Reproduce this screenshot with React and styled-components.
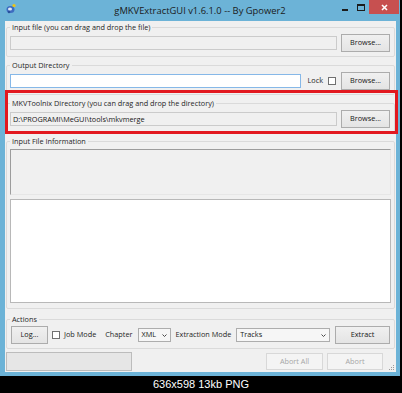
import React from 'react'
import styled, { createGlobalStyle } from 'styled-components'

const GlobalStyle = createGlobalStyle`
  body {
    margin: 0;
    background: #000;
    font-family: 'Open Sans', 'Liberation Sans', sans-serif;
  }
`

const UI_FONT = `'Open Sans', 'Liberation Sans', sans-serif`

const Page = styled.div`
  width: 402px;
  height: 393px;
  background: #000;
  display: flex;
  flex-direction: column;
`

const Window = styled.div`
  width: 400px;
  height: 376px;
  background: #6cb3d7;
  display: flex;
  flex-direction: column;
`

const TitleBar = styled.div`
  height: 21px;
  display: grid;
  grid-template-columns: 1fr auto 1fr;
  align-items: start;
`

const AppIcon = styled.svg`
  margin: 3px 0 0 6px;
`

const Title = styled.div`
  font: 9.4px/22px ${UI_FONT};
  color: #1b1b1b;
  white-space: nowrap;
`

const Controls = styled.div`
  justify-self: end;
  display: flex;
  margin-right: 1px;
`

const CaptionButton = styled.div`
  width: ${p => p.$w}px;
  height: 14px;
  background: ${p => (p.$close ? '#c75050' : 'transparent')};
  display: flex;
  align-items: center;
  justify-content: center;
`

const Client = styled.div`
  position: relative;
  flex: 1;
  margin: 0 4px 4px 5px;
  background: #f0f0f0;
  display: flex;
  flex-direction: column;
  padding: 2px 0 1px;
`

const Group = styled.fieldset`
  margin: ${p => p.$mt ?? 4}px 1px 0;
  padding: ${p => p.$pt ?? 2}px 4px ${p => p.$pb ?? 4}px 3px;
  border: 1px solid #dadada;
  border-radius: 2px;
  min-width: 0;
  display: flex;
  flex-direction: column;
`

const Legend = styled.legend`
  padding: 0 2px;
  font: 7.3px/9px ${UI_FONT};
  color: #262626;
`

const Row = styled.div`
  display: flex;
  align-items: center;
  height: 18px;
`

const TextBox = styled.div`
  flex: 1;
  box-sizing: border-box;
  height: 14px;
  padding: 0 2px;
  border: 1px solid ${p => (p.$active ? '#86b8e8' : '#cbcbcb')};
  background: ${p => (p.$active ? '#fff' : '#f0f0f0')};
  font: 7.3px/12px ${UI_FONT};
  color: #151515;
  white-space: nowrap;
  overflow: hidden;
`

const Button = styled.button`
  box-sizing: border-box;
  flex: none;
  width: ${p => p.$w}px;
  height: ${p => p.$h ?? 18}px;
  margin: 0 0 0 ${p => (p.$ml === 'auto' ? 'auto' : `${p.$ml ?? 0}px`)};
  padding: 0;
  border: 1px solid ${p => (p.disabled ? '#d8d8d8' : '#acacac')};
  background: ${p => (p.disabled ? '#f4f4f4' : 'linear-gradient(#f0f0f0, #e4e4e4)')};
  color: ${p => (p.disabled ? '#a6a6a6' : '#151515')};
  font: 7.3px/1 ${UI_FONT};
`

const Text = styled.span`
  flex: none;
  margin-left: ${p => p.$ml ?? 0}px;
  font: 7.3px/1 ${UI_FONT};
  color: #1e1e1e;
  white-space: nowrap;
`

const CheckBox = styled.span`
  flex: none;
  box-sizing: border-box;
  width: 8px;
  height: 8px;
  margin-left: ${p => p.$ml ?? 0}px;
  border: 1px solid #707070;
  background: #fff;
`

const Combo = styled.div`
  flex: none;
  box-sizing: border-box;
  width: ${p => p.$w}px;
  height: 14px;
  margin-left: ${p => p.$ml ?? 0}px;
  padding: 0 3px 0 3px;
  border: 1px solid #adadad;
  background: #f6f6f6;
  display: flex;
  align-items: center;
  justify-content: space-between;
  font: 7.3px/1 ${UI_FONT};
  color: #151515;
`

const InfoBox = styled.div`
  height: 46px;
  margin-right: -1px;
  box-sizing: border-box;
  border-style: solid;
  border-width: 1px;
  border-color: #9c9c9c #e6e6e6 #e6e6e6 #9c9c9c;
  background: #f0f0f0;
`

const NotesBox = styled.div`
  height: 104px;
  margin: 4px -1px 0 0;
  box-sizing: border-box;
  border: 1px solid #b8b8b8;
  background: #fff;
`

const StatusRow = styled.div`
  display: flex;
  align-items: center;
  height: 19px;
  margin-top: 3px;
  padding-left: 1px;
`

const Progress = styled.div`
  box-sizing: border-box;
  width: 126px;
  height: 19px;
  border: 1px solid #bcbcbc;
  background: #e6e6e6;
`

const Grip = styled.svg`
  flex: none;
  align-self: flex-end;
`

const Highlight = styled.div`
  position: absolute;
  top: 69px;
  left: 0;
  width: 393px;
  height: 44px;
  box-sizing: border-box;
  border: 3px solid #e2181f;
  pointer-events: none;
`

const Caption = styled.div`
  flex: 1;
  text-align: center;
  font: 11px/17px 'Liberation Sans', Arial, sans-serif;
  color: #fff;
`

const Chevron = () => (
  <svg width="5" height="3" viewBox="0 0 5 3">
    <polyline points="0.5,0.5 2.5,2.5 4.5,0.5" fill="none" stroke="#4a4a4a" strokeWidth="1" />
  </svg>
)

export default function App() {
  return (
    <Page>
      <GlobalStyle />
      <Window>
        <TitleBar>
          <AppIcon width="10" height="11" viewBox="0 0 10 11">
            <ellipse cx="4.5" cy="6.5" rx="4" ry="3.5" fill="#3d6cc0" />
            <ellipse cx="4" cy="6" rx="2" ry="1.5" fill="#dfe8f6" />
            <circle cx="3" cy="9" r="1.2" fill="#274f9a" />
            <circle cx="8" cy="2.5" r="1.6" fill="#f1c40f" />
          </AppIcon>
          <Title>gMKVExtractGUI v1.6.1.0 -- By Gpower2</Title>
          <Controls>
            <CaptionButton $w={16}>
              <svg width="16" height="14" viewBox="0 0 16 14">
                <rect x="5" y="9" width="6" height="2" fill="#1c1c1c" />
              </svg>
            </CaptionButton>
            <CaptionButton $w={16}>
              <svg width="16" height="14" viewBox="0 0 16 14">
                <rect x="4.5" y="4.5" width="7" height="6" fill="none" stroke="#1c1c1c" strokeWidth="1" />
                <rect x="4" y="4" width="8" height="2" fill="#1c1c1c" />
              </svg>
            </CaptionButton>
            <CaptionButton $w={30} $close>
              <svg width="7" height="7" viewBox="0 0 7 7">
                <path d="M1 1 L6 6 M6 1 L1 6" stroke="#fff" strokeWidth="1.6" />
              </svg>
            </CaptionButton>
          </Controls>
        </TitleBar>

        <Client>
          <Group $mt={0}>
            <Legend>Input file (you can drag and drop the file)</Legend>
            <Row>
              <TextBox />
              <Button $w={49} $ml={4}>Browse...</Button>
            </Row>
          </Group>

          <Group>
            <Legend>Output Directory</Legend>
            <Row>
              <TextBox $active />
              <Text $ml={6}>Lock</Text>
              <CheckBox $ml={5} />
              <Button $w={49} $ml={5}>Browse...</Button>
            </Row>
          </Group>

          <Group>
            <Legend>MKVToolnix Directory (you can drag and drop the directory)</Legend>
            <Row>
              <TextBox>D:\PROGRAMI\MeGUI\tools\mkvmerge</TextBox>
              <Button $w={49} $ml={4}>Browse...</Button>
            </Row>
          </Group>

          <Group $pt={3} $pb={5}>
            <Legend>Input File Information</Legend>
            <InfoBox />
            <NotesBox />
          </Group>

          <Group $mt={6}>
            <Legend>Actions</Legend>
            <Row>
              <Button $w={37} $ml={1}>Log...</Button>
              <CheckBox $ml={4} />
              <Text $ml={4}>Job Mode</Text>
              <Text $ml={9}>Chapter</Text>
              <Combo $w={33} $ml={5}>
                XML
                <Chevron />
              </Combo>
              <Text $ml={5}>Extraction Mode</Text>
              <Combo $w={94} $ml={5}>
                Tracks
                <Chevron />
              </Combo>
              <Button $w={55} $ml="auto">Extract</Button>
            </Row>
          </Group>

          <StatusRow>
            <Progress />
            <Button $w={57} $h={17} $ml="auto" disabled>Abort All</Button>
            <Button $w={56} $h={17} $ml={4} disabled>Abort</Button>
            <Grip width="13" height="19" viewBox="0 0 13 19">
              {[[10, 17], [8, 17], [6, 17], [10, 15], [8, 15], [10, 13]].map(([x, y]) => (
                <rect key={`${x}-${y}`} x={x} y={y} width="1" height="1" fill="#9a9a9a" />
              ))}
            </Grip>
          </StatusRow>

          <Highlight />
        </Client>
      </Window>
      <Caption>636x598 13kb PNG</Caption>
    </Page>
  )
}
